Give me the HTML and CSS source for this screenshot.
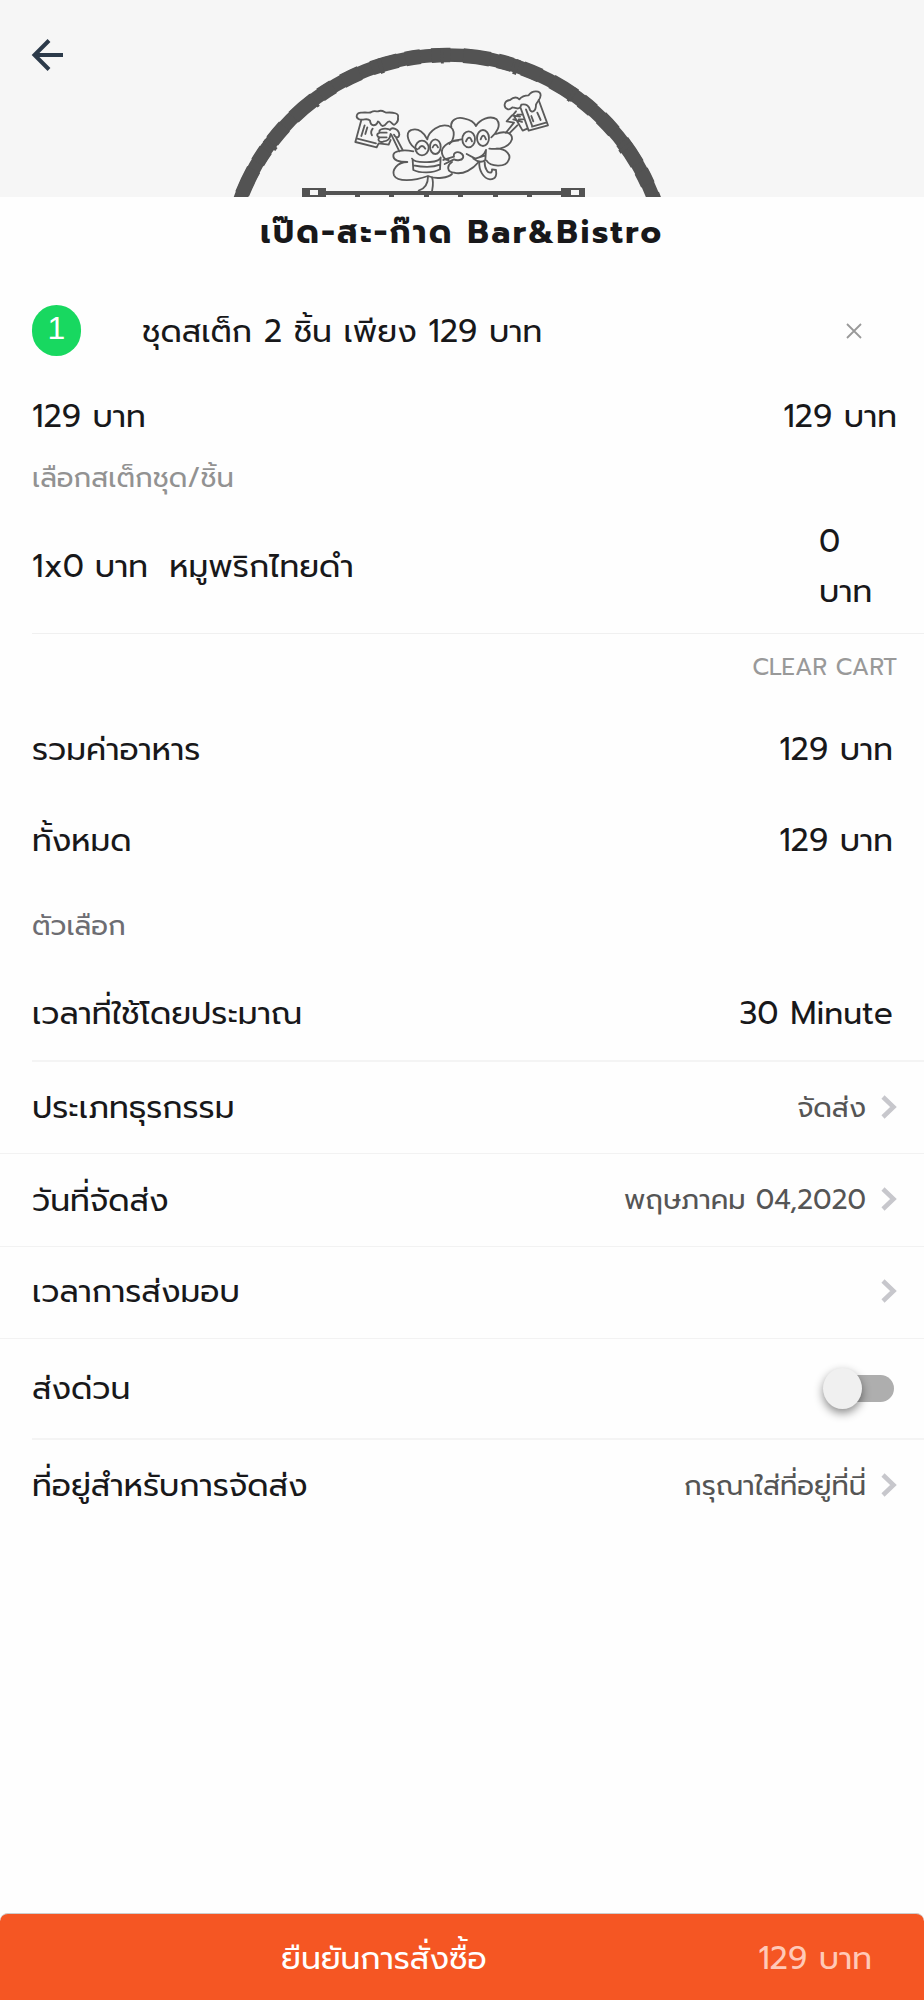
FILE: index.html
```html
<!DOCTYPE html>
<html lang="th">
<head>
    <meta charset="UTF-8">
    <meta name="viewport" content="width=device-width, initial-scale=1.0">
    <title>เป๊ด-สะ-ก๊าด Bar&amp;Bistro</title>
    <link rel="stylesheet" href="styles.css">
</head>
<body>
    <header class="hero">
        <svg class="hero-art" viewBox="0 0 924 197" fill="none">
            <!-- back arrow -->
            <path d="M63 55H35M49 40.500L34.500 55L49 69.500" stroke="#2c3a4a" stroke-width="4"/>
            <!-- badge ring -->
            <g stroke="#535353">
                <circle cx="447" cy="275.5" r="220.5" stroke-width="13.5"/>
                <circle cx="447" cy="275.5" r="220.5" stroke-width="14.7" stroke-dasharray="19 13 27 8 15 11"/>
                <circle cx="447" cy="275.5" r="219.8" stroke-width="15.5" stroke-dasharray="4 59 3 72"/>
            </g>
            <path d="M302 188h24v3h235v-3h24v9h-24v-2H326v2H302zM355 195h5v2h-5zM389 195h5v2h-5zM424 195h5v2h-5zM458 195h5v2h-5zM493 195h5v2h-5zM527 195h5v2h-5z" fill="#535353"/>
            <path d="M310 190h8v5h-8zM571 190h8v5h-8z" fill="#f6f6f6"/>
            <!-- clovers with beer mugs -->
            <g transform="translate(330 80) scale(.3333)" stroke="#5a5a5a" stroke-width="5.5" stroke-linejoin="round" stroke-linecap="round">
                <path d="M88 118C74 112 80 96 96 98C110 96 120 100 124 96C134 90 142 96 144 94C158 88 164 98 168 98C190 96 208 100 204 112C206 124 200 128 198 130C190 142 184 124 178 124C168 124 170 138 158 138C150 138 150 124 144 124C138 140 122 140 120 122C112 112 102 122 88 118Z"/>
                <path d="M94 120L76 186L140 202L146 190L176 194L182 180M82 176L138 190M104 136L94 168M112 142l-6 20M128 146q-8 10-2 20"/>
                <path d="M178 148C160 142 142 150 150 158C136 162 142 172 150 172C138 180 152 190 162 184C172 184 180 176 182 162M150 158h20M150 172h20M180 150C186 140 206 146 208 164C206 176 196 174 192 164M184 164L208 214M198 172L218 210"/>
                <path d="M262 208C236 196 222 156 244 150C266 142 284 160 292 178C296 152 330 130 356 138C380 148 372 180 358 192M250 214C220 208 188 212 190 228C190 244 216 246 232 246C200 246 186 272 192 286C202 306 250 304 294 288C320 300 356 292 366 282"/>
                <path d="M246 236C250 244 270 248 300 246C320 246 332 238 332 232L330 268C310 280 270 280 250 270L248 240M250 256C280 262 310 262 330 254M294 290C294 310 284 326 266 332M306 292C312 306 308 322 306 334"/>
                <ellipse cx="276" cy="204" rx="20" ry="22"/><ellipse cx="316" cy="200" rx="16" ry="22"/>
                <path d="M266 206q10-16 20 0M308 202q8-16 16 0"/>
                <path d="M364 140C360 122 380 108 404 116C424 120 434 130 438 138C448 120 480 104 500 118C516 136 498 160 484 172M394 178C350 184 328 204 338 226C342 236 350 240 356 240M366 246C350 256 350 276 372 278C400 286 430 266 446 246M498 162C520 152 548 156 546 178C540 198 516 210 478 206M500 206C530 206 544 226 536 240C528 264 480 260 470 242"/>
                <ellipse cx="416" cy="178" rx="19" ry="24"/><ellipse cx="459" cy="174" rx="18" ry="24"/>
                <path d="M408 184q10-22 18 0M452 178q8-22 16 0M372 182h12"/>
                <path d="M410 222L436 236C452 232 464 222 468 210L466 240C454 250 440 244 430 236M436 236L466 226M340 240L372 230C368 216 386 212 396 222C404 230 398 240 388 240C380 242 376 240 372 238L344 252"/>
                <path d="M448 246C446 270 460 296 480 298C500 298 500 282 498 270L486 268C488 282 474 280 470 270C464 262 464 250 464 246"/>
                <path d="M528 158L552 128M538 160L562 136M552 128L530 124L546 106L570 110M550 118L576 126M558 94L550 104L578 152L592 146M562 104h14M566 118h14"/>
                <path d="M534 88C518 82 522 62 540 60C552 50 562 52 568 58C576 48 586 46 596 46C606 30 632 30 632 46C632 58 622 64 618 74C618 94 606 100 600 90C598 80 590 70 574 74C570 92 556 84 548 82C542 86 538 90 534 88Z"/>
                <path d="M626 60L654 136L596 152L572 84M606 140L648 128M588 88L606 136M604 108L610 124M622 98L632 120"/>
            </g>
        </svg>
    </header>

    <h1 class="shop-name">เป๊ด-สะ-ก๊าด Bar&amp;Bistro</h1>

    <section class="cart">
        <div class="item-head">
            <span class="qty">1</span>
            <span class="item-name">ชุดสเต็ก 2 ชิ้น เพียง 129 บาท</span>
            <svg class="remove" viewBox="0 0 16 16"><path d="M1 1L15 15M15 1L1 15" stroke="#999" stroke-width="1.8"/></svg>
        </div>
        <div class="item-price"><span>129 บาท</span><span>129 บาท</span></div>
        <p class="option-title">เลือกสเต็กชุด/ชิ้น</p>
        <div class="option">
            <span class="option-name">1x0 บาท&nbsp; หมูพริกไทยดำ</span>
            <span class="option-price">0 บาท</span>
        </div>
    </section>

    <div class="clear">CLEAR CART</div>

    <div class="row total"><span>รวมค่าอาหาร</span><span>129 บาท</span></div>
    <div class="row total"><span>ทั้งหมด</span><span>129 บาท</span></div>
    <p class="group-title">ตัวเลือก</p>
    <div class="row"><span>เวลาที่ใช้โดยประมาณ</span><span>30 Minute</span></div>
    <div class="row link line-inset"><span>ประเภทธุรกรรม</span><span class="value">จัดส่ง</span><svg class="chevron" viewBox="0 0 16 24"><path d="M2 2L12.5 12L2 22"/></svg></div>
    <div class="row link line"><span>วันที่จัดส่ง</span><span class="value">พฤษภาคม 04,2020</span><svg class="chevron" viewBox="0 0 16 24"><path d="M2 2L12.5 12L2 22"/></svg></div>
    <div class="row link line time"><span>เวลาการส่งมอบ</span><span class="value"></span><svg class="chevron" viewBox="0 0 16 24"><path d="M2 2L12.5 12L2 22"/></svg></div>
    <div class="row express line"><span>ส่งด่วน</span><span class="toggle"></span></div>
    <div class="row link line-inset"><span>ที่อยู่สำหรับการจัดส่ง</span><span class="value">กรุณาใส่ที่อยู่ที่นี่</span><svg class="chevron" viewBox="0 0 16 24"><path d="M2 2L12.5 12L2 22"/></svg></div>

    <footer class="confirm">
        <span class="confirm-text">ยืนยันการสั่งซื้อ</span>
        <span class="confirm-price">129 บาท</span>
    </footer>
</body>
</html>
```
FILE: styles.css
```css
* {
    box-sizing: border-box;
}
body {
    display: flex;
    flex-direction: column;
    height: 2000px;
    margin: 0;
    font-family: Prompt, "Noto Sans Thai", "Noto Sans", sans-serif;
    font-size: 31.5px;
    color: #18181a;
    background: #fefefe;
}
p, h1 {
    margin: 0;
}
.hero {
    height: 197px;
    background: #f6f6f6;
}
.hero-art {
    display: block;
    width: 924px;
    height: 197px;
}
.shop-name {
    height: 70px;
    line-height: 72px;
    font-size: 32px;
    font-weight: 700;
    letter-spacing: 2.6px;
    text-align: center;
}
.cart {
    height: 366px;
    padding-left: 32px;
}
.item-head {
    display: flex;
    align-items: center;
    height: 127px;
}
.qty {
    width: 49px;
    height: 51px;
    border-radius: 25px;
    background: #18d860;
    color: white;
    font-family: "Liberation Sans", Arial, sans-serif;
    font-size: 32px;
    text-align: center;
    line-height: 47px;
}
.item-name {
    flex: 1;
    margin-left: 61px;
    padding-top: 1px;
}
.remove {
    width: 16px;
    height: 16px;
    margin-right: 62px;
}
.item-price {
    display: flex;
    justify-content: space-between;
    height: 46px;
    line-height: 46px;
    padding-right: 27px;
}
.option-title {
    height: 79px;
    line-height: 77px;
    font-size: 27.5px;
    color: #929292;
}
.option {
    display: flex;
    align-items: center;
    justify-content: space-between;
    height: 114px;
    padding-bottom: 18px;
    line-height: 50px;
}
.option-name {
    word-spacing: -1px;
}
.option-price {
    width: 105px;
    padding-right: 45px;
}
.clear {
    height: 69px;
    margin-left: 32px;
    padding-right: 27px;
    border-top: 1px solid #f0f0f0;
    line-height: 66px;
    font-size: 23.5px;
    text-align: right;
    color: #999;
}
.row {
    display: flex;
    align-items: center;
    justify-content: space-between;
    height: 93px;
    padding: 0 31px 0 32px;
}
.total {
    height: 91px;
    padding-top: 3px;
}
.group-title {
    height: 83px;
    padding-left: 32px;
    line-height: 84px;
    font-size: 27.5px;
    color: #6d6d72;
}
.row.link {
    padding-right: 27px;
}
.value {
    flex: 1;
    margin-right: 15px;
    font-size: 27.5px;
    text-align: right;
    color: #555;
}
.line {
    border-top: 1px solid #f2f2f2;
}
.row.line-inset {
    margin-left: 32px;
    padding-left: 0;
    border-top: 2px solid #f4f4f4;
}
.row.time {
    height: 92px;
    padding-bottom: 2px;
}
.chevron {
    width: 16px;
    height: 24px;
    margin-bottom: 2px;
    fill: none;
    stroke: #c7c7cc;
    stroke-width: 4.5;
}
.row.express {
    height: 100px;
    padding-right: 30px;
}
.toggle {
    position: relative;
    width: 66px;
    height: 27px;
    border-radius: 14px;
    background: #aeaeae;
}
.toggle::before {
    content: "";
    position: absolute;
    left: -5px;
    top: -7px;
    width: 39px;
    height: 41px;
    border-radius: 50%;
    background: #f0f0f0;
    box-shadow: 0 4px 10px rgba(0, 0, 0, 0.45);
}
.confirm {
    display: flex;
    align-items: center;
    height: 87px;
    margin-top: auto;
    padding-top: 2px;
    border-radius: 8px 8px 0 0;
    border-top: 1px solid #ccc;
    background: #f55623;
    color: white;
}
.confirm-text {
    flex: 1;
    padding-left: 281px;
}
.confirm-price {
    padding-right: 52px;
    color: #ffc9b7;
}
```
